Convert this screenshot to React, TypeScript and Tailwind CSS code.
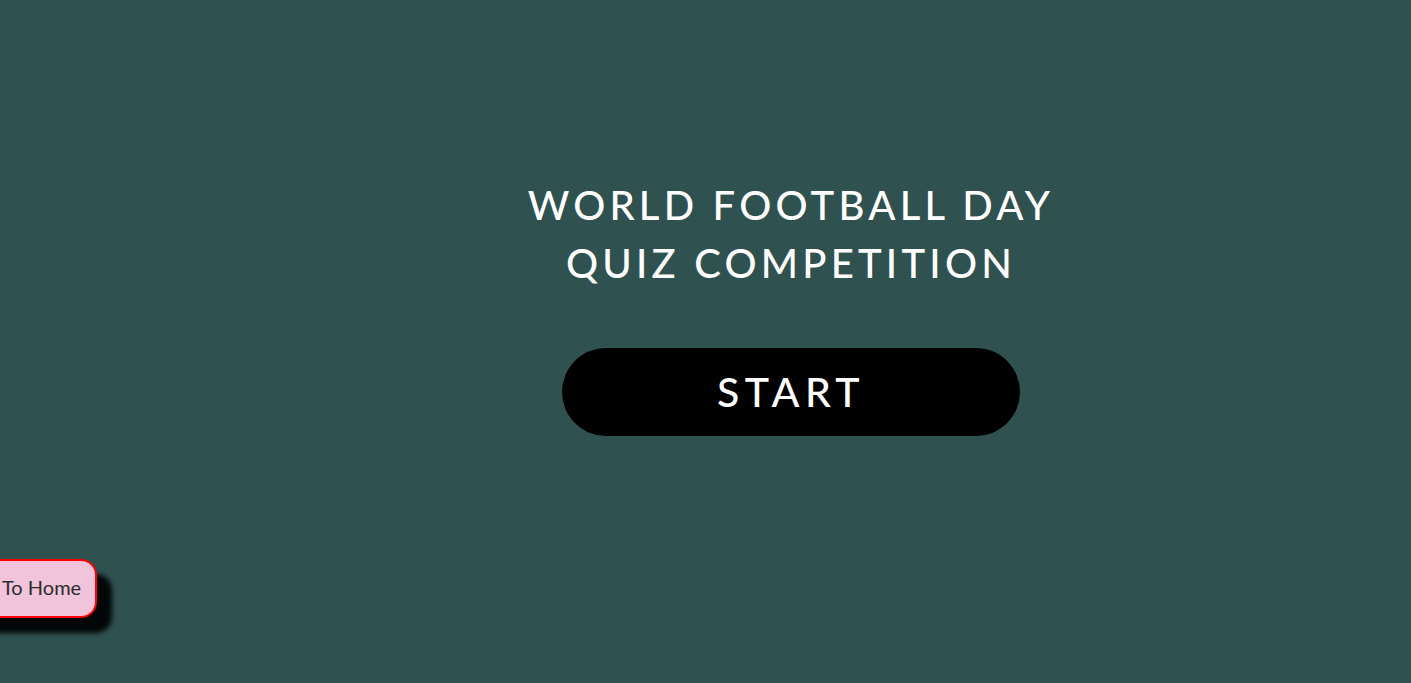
function HomeButton() {
  return (
    <button className="absolute left-[-40px] top-[559px] h-[59px] pl-[40px] pr-[14px] pb-[4px] rounded-[16px] border-2 border-[#ff0000] bg-[#f1c4dc] text-[#2b2b2b] text-[20px] shadow-[15px_15px_5px_rgba(0,0,0,0.92)] font-['Lato',sans-serif]">
      To Home
    </button>
  );
}

export default function App() {
  return (
    <div className="relative min-h-[683px] w-full overflow-hidden bg-[#2f5250] font-['Lato','Noto_Sans',sans-serif]">
      <div className="ml-[171px] flex flex-col items-center pt-[176px]">
        <h1 className="text-white text-[40px] leading-[58px] tracking-[4.2px] text-center font-medium uppercase">
          World Football Day
          <br />
          Quiz Competition
        </h1>
        <button className="mt-[56px] w-[458px] h-[88px] rounded-full bg-black text-white text-[41px] tracking-[5.4px] font-medium">
          START
        </button>
      </div>
      <HomeButton />
    </div>
  );
}
